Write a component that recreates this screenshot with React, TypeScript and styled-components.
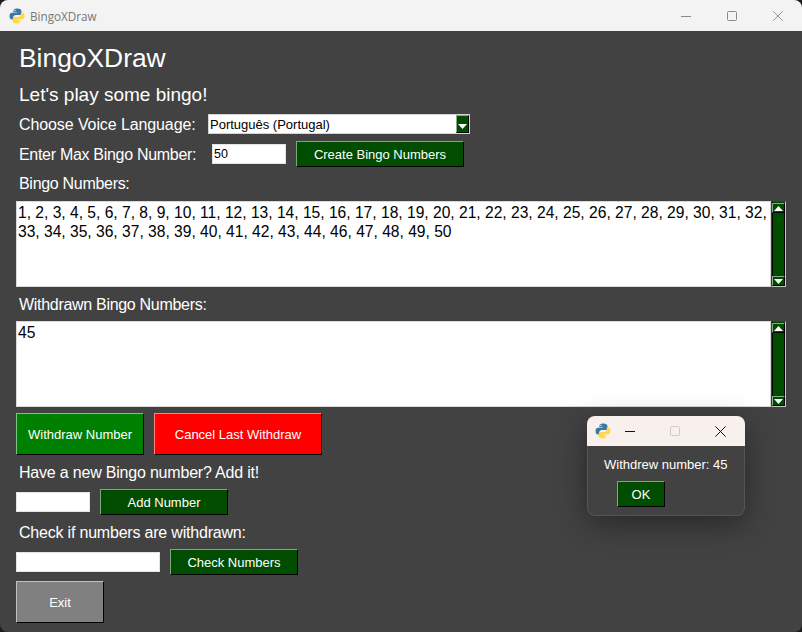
import styled, { createGlobalStyle } from "styled-components";

const GlobalStyle = createGlobalStyle`
  html, body {
    margin: 0;
    padding: 0;
    width: 802px;
    height: 632px;
    overflow: hidden;
    background: #1c1c1c;
    font-family: "Liberation Sans", Arial, sans-serif;
  }
`;

const Window = styled.div`
  position: relative;
  width: 802px;
  height: 632px;
  border-radius: 8px;
  overflow: hidden;
  background: #424242;
  display: flex;
  flex-direction: column;
`;

const TitleBar = styled.div`
  height: 31px;
  flex: none;
  background: #f3f3f3;
  display: flex;
  align-items: center;
  padding-left: 9px;
  gap: 5px;
  color: #777;
  font-size: 11.7px;
  font-family: "Open Sans", "Liberation Sans", sans-serif;
`;

const WindowControls = styled.div`
  margin-left: auto;
  display: flex;
  padding-right: 1px;
  color: #8a8a8a;
`;

const ControlSlot = styled.span`
  width: 46px;
  height: 31px;
  display: flex;
  align-items: center;
  justify-content: center;
`;

const Body = styled.div`
  flex: 1;
  display: flex;
  flex-direction: column;
  align-items: flex-start;
  padding: 0 16px;
  color: #fff;
`;

const Heading = styled.div`
  font-size: 26.4px;
  line-height: 31px;
  margin: 12px 0 0 3px;
`;

const SubHeading = styled.div`
  font-size: 19px;
  line-height: 21px;
  margin: 10px 0 0 3px;
`;

const Label = styled.div<{ $top: number; $spacing: number }>`
  font-size: 16px;
  line-height: 18px;
  letter-spacing: ${(p) => p.$spacing}px;
  margin: ${(p) => p.$top}px 0 0 3px;
  white-space: nowrap;
`;

const FieldLabel = styled.div<{ $width: number; $spacing: number }>`
  width: ${(p) => p.$width}px;
  font-size: 16px;
  line-height: 18px;
  letter-spacing: ${(p) => p.$spacing}px;
  margin: 2px 0 0 3px;
  white-space: nowrap;
`;

const Row = styled.div<{ $top: number; $gap: number }>`
  display: flex;
  align-items: center;
  gap: ${(p) => p.$gap}px;
  margin-top: ${(p) => p.$top}px;
`;

const SelectBox = styled.div`
  width: 262px;
  height: 20px;
  box-sizing: border-box;
  background: #fff;
  border: 1px solid #d4d4d4;
  color: #000;
  font-size: 13px;
  display: flex;
  align-items: center;
  justify-content: space-between;
  padding-left: 1px;
`;

const SelectArrow = styled.span`
  width: 13px;
  height: 18px;
  box-sizing: border-box;
  background: #004d00;
  border: 1px solid;
  border-color: #8aa88a #000 #000 #8aa88a;
  display: flex;
  align-items: flex-end;
  justify-content: center;
  padding-bottom: 3px;
`;

const Entry = styled.div<{ $width: number }>`
  width: ${(p) => p.$width}px;
  height: 20px;
  box-sizing: border-box;
  background: #fff;
  border: 1px solid #e4e4e4;
  color: #000;
  font-size: 12.5px;
  line-height: 18px;
  padding-left: 1px;
`;

const Button = styled.div<{ $width: number; $height: number; $bg: string; $light: string }>`
  width: ${(p) => p.$width}px;
  height: ${(p) => p.$height}px;
  box-sizing: border-box;
  background: ${(p) => p.$bg};
  border: 1px solid;
  border-color: ${(p) => p.$light} #000 #000 ${(p) => p.$light};
  color: #fff;
  font-size: 13px;
  padding-top: 1px;
  display: flex;
  align-items: center;
  justify-content: center;
  white-space: nowrap;
`;

const TextPanel = styled.div<{ $top: number }>`
  display: flex;
  width: 770px;
  height: 86px;
  margin-top: ${(p) => p.$top}px;
`;

const TextArea = styled.div`
  flex: 1;
  box-sizing: border-box;
  background: #fff;
  border: 1px solid #d8d8d8;
  color: #000;
  font-size: 15.6px;
  line-height: 19px;
  padding: 1px 0 0 1px;
`;

const ScrollBar = styled.div`
  width: 15px;
  box-sizing: border-box;
  background: #004d00;
  border: 1px solid;
  border-color: #3a3a3a #c8c8c8 #c8c8c8 #3a3a3a;
  box-shadow: inset 1px 0 #000, inset -1px 0 #000;
  padding-top: 1px;
  display: flex;
  flex-direction: column;
  justify-content: space-between;
`;

const ScrollArrow = styled.span`
  height: 10px;
  background: #004d00;
  box-sizing: border-box;
  border: 1px solid;
  border-color: #8aa88a #000 #000 #8aa88a;
  display: flex;
  align-items: center;
  justify-content: center;
`;

const Dialog = styled.div`
  position: absolute;
  left: 587px;
  top: 416px;
  width: 158px;
  height: 100px;
  border-radius: 8px;
  overflow: hidden;
  display: flex;
  flex-direction: column;
  background: #424242;
  box-shadow: 0 8px 30px rgba(0, 0, 0, 0.4);
  color: #fff;
`;

const DialogTitle = styled.div`
  height: 30px;
  flex: none;
  background: #f8f0ed;
  display: flex;
  align-items: center;
  padding-left: 8px;
  color: #111;
`;

const DialogControl = styled.span<{ $left: number; $muted?: boolean }>`
  display: flex;
  margin-left: ${(p) => p.$left}px;
  color: ${(p) => (p.$muted ? "#cfcaca" : "inherit")};
`;

const DialogContent = styled.div`
  flex: 1;
  border: 1px solid #555;
  border-top: 0;
  border-radius: 0 0 8px 8px;
`;

const DialogText = styled.div`
  font-size: 13px;
  line-height: 14px;
  margin: 12px 0 0 16px;
  white-space: nowrap;
`;

const DialogAction = styled.div`
  margin: 9px 0 0 29px;
`;

const PythonLogo = ({ size }: { size: number }) => (
  <svg width={size} height={size} viewBox="1 1 30 30">
    <path
      fill="#3b76a8"
      d="M15.8 2c-5 0-6.500 1.900-6.500 4.400V9h6.800v1H6.700C4 10 2 12 2 16.200c0 4.300 1.800 6.300 4.400 6.300h2.500v-3.400c0-2.700 2.300-5 5-5h6.600c2.100 0 3.800-1.800 3.800-3.900V6.400C24.300 3.800 22 2 19.400 2.200 18.200 2 17 2 15.800 2zM12.200 4.400a1.300 1.300 0 1 1 0 2.600 1.300 1.300 0 0 1 0-2.600z"
    />
    <path
      fill="#ffd845"
      d="M16.200 30c5 0 6.500-1.900 6.500-4.400V23h-6.800v-1h9.400c2.700 0 4.700-2 4.700-6.200 0-4.300-1.800-6.300-4.400-6.300h-2.500v3.400c0 2.700-2.300 5-5 5h-6.600c-2.100 0-3.800 1.800-3.800 3.900v3.800c0 2.600 2.300 4.400 4.900 4.200 1.200.2 2.400.2 3.600.2zM19.800 27.600a1.300 1.300 0 1 1 0-2.600 1.300 1.300 0 0 1 0 2.600z"
    />
  </svg>
);

const MinimizeIcon = ({ size }: { size: number }) => (
  <svg width={size} height={size} viewBox="0 0 10 10">
    <path d="M0 5.500h10" stroke="currentColor" strokeWidth="1" />
  </svg>
);

const MaximizeIcon = ({ size }: { size: number }) => (
  <svg width={size} height={size} viewBox="0 0 10 10">
    <rect x="0.500" y="0.500" width="9" height="9" rx="1" fill="none" stroke="currentColor" />
  </svg>
);

const CloseIcon = ({ size }: { size: number }) => (
  <svg width={size} height={size} viewBox="0 0 10 10">
    <path d="M0.300 0.300l9.400 9.400M9.700 0.300l-9.400 9.400" stroke="currentColor" strokeWidth="0.900" />
  </svg>
);

const Triangle = ({ down }: { down?: boolean }) => (
  <svg width="9" height="5" viewBox="0 0 9 5">
    <path d={down ? "M0 0h9L4.500 5z" : "M0 5h9L4.500 0z"} fill="#fff" />
  </svg>
);

const Scroll = () => (
  <ScrollBar>
    <ScrollArrow>
      <Triangle />
    </ScrollArrow>
    <ScrollArrow>
      <Triangle down />
    </ScrollArrow>
  </ScrollBar>
);

const DARK_GREEN = "#004d00";
const DARK_LIGHT = "#7fa67f";

const numbers =
  "1, 2, 3, 4, 5, 6, 7, 8, 9, 10, 11, 12, 13, 14, 15, 16, 17, 18, 19, 20, 21, 22, 23, 24, 25, 26, 27, 28, 29, 30, 31, 32, 33, 34, 35, 36, 37, 38, 39, 40, 41, 42, 43, 44, 46, 47, 48, 49, 50";

const App = () => {
  return (
    <Window>
      <GlobalStyle />
      <TitleBar>
        <PythonLogo size={16} />
        BingoXDraw
        <WindowControls>
          <ControlSlot>
            <MinimizeIcon size={10} />
          </ControlSlot>
          <ControlSlot>
            <MaximizeIcon size={10} />
          </ControlSlot>
          <ControlSlot>
            <CloseIcon size={10} />
          </ControlSlot>
        </WindowControls>
      </TitleBar>
      <Body>
        <Heading>BingoXDraw</Heading>
        <SubHeading>Let's play some bingo!</SubHeading>
        <Row $top={9} $gap={10}>
          <FieldLabel $width={179} $spacing={-0.1}>
            Choose Voice Language:
          </FieldLabel>
          <SelectBox>
            Português (Portugal)
            <SelectArrow>
              <Triangle down />
            </SelectArrow>
          </SelectBox>
        </Row>
        <Row $top={7} $gap={10}>
          <FieldLabel $width={183} $spacing={-0.3}>
            Enter Max Bingo Number:
          </FieldLabel>
          <Entry $width={74}>50</Entry>
          <Button $width={168} $height={26} $bg={DARK_GREEN} $light={DARK_LIGHT}>
            Create Bingo Numbers
          </Button>
        </Row>
        <Label $top={8} $spacing={-0.3}>
          Bingo Numbers:
        </Label>
        <TextPanel $top={8}>
          <TextArea>{numbers}</TextArea>
          <Scroll />
        </TextPanel>
        <Label $top={9} $spacing={-0.3}>
          Withdrawn Bingo Numbers:
        </Label>
        <TextPanel $top={7}>
          <TextArea>45</TextArea>
          <Scroll />
        </TextPanel>
        <Row $top={6} $gap={10}>
          <Button $width={128} $height={42} $bg="#008000" $light="#7fbf7f">
            Withdraw Number
          </Button>
          <Button $width={168} $height={42} $bg="#ff0000" $light="#ff8080">
            Cancel Last Withdraw
          </Button>
        </Row>
        <Label $top={9} $spacing={-0.2}>
          Have a new Bingo number? Add it!
        </Label>
        <Row $top={7} $gap={10}>
          <Entry $width={74} />
          <Button $width={128} $height={26} $bg={DARK_GREEN} $light={DARK_LIGHT}>
            Add Number
          </Button>
        </Row>
        <Label $top={9} $spacing={-0.2}>
          Check if numbers are withdrawn:
        </Label>
        <Row $top={7} $gap={10}>
          <Entry $width={144} />
          <Button $width={128} $height={26} $bg={DARK_GREEN} $light={DARK_LIGHT}>
            Check Numbers
          </Button>
        </Row>
        <Row $top={6} $gap={0}>
          <Button $width={88} $height={42} $bg="#808080" $light="#c0c0c0">
            Exit
          </Button>
        </Row>
      </Body>
      <Dialog>
        <DialogTitle>
          <PythonLogo size={16} />
          <DialogControl $left={14}>
            <MinimizeIcon size={10} />
          </DialogControl>
          <DialogControl $left={35} $muted>
            <MaximizeIcon size={10} />
          </DialogControl>
          <DialogControl $left={35}>
            <CloseIcon size={11} />
          </DialogControl>
        </DialogTitle>
        <DialogContent>
          <DialogText>Withdrew number: 45</DialogText>
          <DialogAction>
            <Button $width={48} $height={26} $bg={DARK_GREEN} $light={DARK_LIGHT}>
              OK
            </Button>
          </DialogAction>
        </DialogContent>
      </Dialog>
    </Window>
  );
};

export default App;
